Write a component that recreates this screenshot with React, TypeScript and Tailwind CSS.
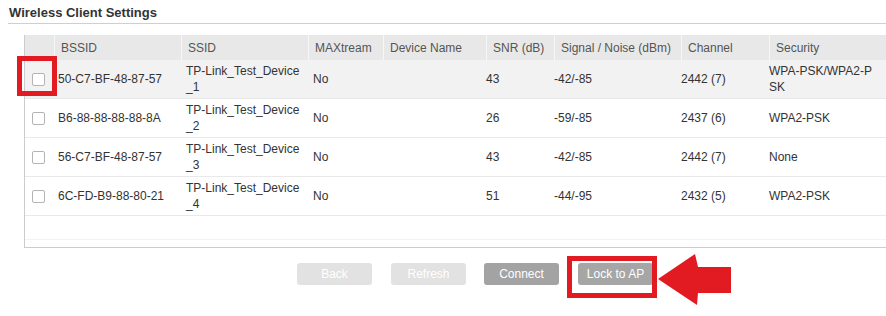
const rows = [
  { bssid: '50-C7-BF-48-87-57', ssid: 'TP-Link_Test_Device_1', max: 'No', snr: '43', signal: '-42/-85', channel: '2442 (7)', security: 'WPA-PSK/WPA2-PSK' },
  { bssid: 'B6-88-88-88-88-8A', ssid: 'TP-Link_Test_Device_2', max: 'No', snr: '26', signal: '-59/-85', channel: '2437 (6)', security: 'WPA2-PSK' },
  { bssid: '56-C7-BF-48-87-57', ssid: 'TP-Link_Test_Device_3', max: 'No', snr: '43', signal: '-42/-85', channel: '2442 (7)', security: 'None' },
  { bssid: '6C-FD-B9-88-80-21', ssid: 'TP-Link_Test_Device_4', max: 'No', snr: '51', signal: '-44/-95', channel: '2432 (5)', security: 'WPA2-PSK' },
]

const cols = 'grid grid-cols-[29px_127px_127px_75px_103px_68px_127px_88px_118px]'

const headers = ['BSSID', 'SSID', 'MAXtream', 'Device Name', 'SNR (dB)', 'Signal / Noise (dBm)', 'Channel', 'Security']

export default function App() {
  return (
    <div className="h-[316px] w-[886px] overflow-hidden bg-white font-['Liberation_Sans',Arial,sans-serif] text-[12px] leading-4 text-[#333]">
      {/* ─── Title ─── */}
      <div className="ml-2 border-b border-[#cfcfcf] pt-[5px] pb-[2px]">
        <h2 className="pl-px text-[13px] font-bold text-[#333]">Wireless Client Settings</h2>
      </div>

      {/* ─── Table ─── */}
      <div className="ml-6 mt-[11px] h-[213px] border-b border-l border-[#cccccc]">
        <div className={`${cols} h-[25px] items-center bg-[#e8e8e8] text-[#555]`}>
          <div className="h-full" />
          {headers.map((h) => (
            <div key={h} className="flex h-full items-center border-l border-[#f7f7f7] pl-[6px] whitespace-nowrap">
              {h}
            </div>
          ))}
        </div>

        {rows.map((row, i) => (
          <div
            key={row.bssid}
            className={`${cols} h-[39px] items-center border-b border-[#e9e9e9] ${i === 0 ? 'bg-[#f2f2f2]' : 'bg-white'}`}
          >
            <div className="relative flex h-full items-center pl-[7px]">
              <span className="block h-[13px] w-[13px] rounded-[2px] border border-[#b4b4b4] bg-white" />
              {i === 0 && (
                <span className="absolute -left-2 -top-1 h-10 w-10 border-[5px] border-[#e21b23]" />
              )}
            </div>
            <div className="pl-1">{row.bssid}</div>
            <div className="pl-[5px] pr-[6px] break-all">{row.ssid}</div>
            <div className="pl-[5px]">{row.max}</div>
            <div />
            <div>{row.snr}</div>
            <div>{row.signal}</div>
            <div>{row.channel}</div>
            <div className="pr-[10px] break-all">{row.security}</div>
          </div>
        ))}
        <div className="h-6 border-b border-[#f3f3f3]" />
      </div>

      {/* ─── Buttons ─── */}
      <div className="mt-[15px] flex items-center">
        <button type="button" className="ml-[297px] h-[22px] w-[75px] rounded-[3px] bg-[#e2e2e2] text-white">
          Back
        </button>
        <button type="button" className="ml-[19px] h-[22px] w-[75px] rounded-[3px] bg-[#e2e2e2] text-white">
          Refresh
        </button>
        <button type="button" className="ml-[18px] h-[22px] w-[75px] rounded-[3px] bg-[#a3a3a3] text-white">
          Connect
        </button>
        <div className="relative ml-[19px]">
          <button type="button" className="h-[22px] w-[75px] rounded-[3px] bg-[#a6a6a6] text-white">
            Lock to AP
          </button>
          <span className="absolute -left-[11px] -top-[7px] h-[42px] w-[90px] border-[5px] border-[#e21b23]" />
          <svg className="absolute left-[80px] -top-[10px]" width="74" height="53" viewBox="0 0 74 53">
            <polygon points="0,26 37,1 40,14 73,14 73,40 40,40 39,52" fill="#e21b23" />
          </svg>
        </div>
      </div>
    </div>
  )
}
